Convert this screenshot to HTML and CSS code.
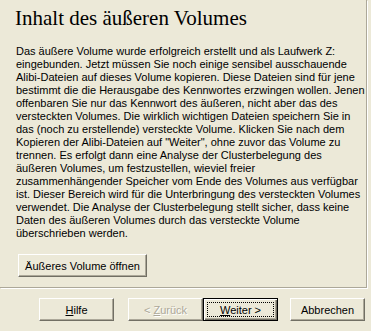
FILE: index.html
```html
<!DOCTYPE html>
<html lang="de">
<head>
<meta charset="utf-8">
<link rel="stylesheet" href="styles.css">
</head>
<body>
<div class="page">
  <div class="panel">
    <h1 class="title">Inhalt des äußeren Volumes</h1>
    <p class="text">Das äußere Volume wurde erfolgreich erstellt und als Laufwerk Z:<br>eingebunden. Jetzt müssen Sie noch einige sensibel ausschauende<br>Alibi-Dateien auf dieses Volume kopieren. Diese Dateien sind für jene<br>bestimmt die die Herausgabe des Kennwortes erzwingen wollen. Jenen<br>offenbaren Sie nur das Kennwort des äußeren, nicht aber das des<br>versteckten Volumes. Die wirklich wichtigen Dateien speichern Sie in<br>das (noch zu erstellende) versteckte Volume. Klicken Sie nach dem<br>Kopieren der Alibi-Dateien auf "Weiter", ohne zuvor das Volume zu<br>trennen. Es erfolgt dann eine Analyse der Clusterbelegung des<br>äußeren Volumes, um festzustellen, wieviel freier<br>zusammenhängender Speicher vom Ende des Volumes aus verfügbar<br>ist. Dieser Bereich wird für die Unterbringung des versteckten Volumes<br>verwendet. Die Analyse der Clusterbelegung stellt sicher, dass keine<br>Daten des äußeren Volumes durch das versteckte Volume<br>überschrieben werden.</p>
    <button class="btn btn-open">Äußeres Volume öffnen</button>
  </div>
  <div class="footer">
    <button class="btn btn-help"><u>H</u>ilfe</button>
    <button class="btn btn-back" disabled>&lt; <u>Z</u>urück</button>
    <button class="btn btn-default"><u>W</u>eiter &gt;</button>
    <button class="btn btn-cancel">Abbrechen</button>
  </div>
</div>
</body>
</html>
```

FILE: styles.css
```css
html, body {
  margin: 0;
  padding: 0;
  background: #ECE9D8;
}
.page {
  width: 371px;
  height: 331px;
  overflow: hidden;
  font-family: "Liberation Sans", Arial, sans-serif;
  font-size: 11px;
  color: #000;
}
.panel {
  width: 367px;
  height: 288px;
  box-sizing: border-box;
  border-right: 1px solid #ACA899;
  border-bottom: 1px solid #ACA899;
  box-shadow: 1px 1px 0 #fff;
  padding: 0 0 0 15px;
  display: flex;
  flex-direction: column;
  align-items: flex-start;
}
.title {
  margin: 6px 0 0 0;
  font-family: "Liberation Serif", "Times New Roman", serif;
  font-weight: normal;
  font-size: 21px;
  line-height: 24px;
}
.text {
  margin: 15px 0 0 1px;
  line-height: 13px;
  white-space: nowrap;
}
.btn {
  font-family: "Liberation Sans", Arial, sans-serif;
  font-size: 11px;
  color: #000;
  background: #ECE9D8;
  height: 23px;
  width: 75px;
  padding: 0;
  margin: 0;
  box-sizing: border-box;
  border: 1px solid;
  border-color: #fff #716F64 #716F64 #fff;
  box-shadow: inset -1px -1px 0 #ACA899;
  border-radius: 0;
  position: relative;
}
.btn-open {
  width: 129px;
  margin: 14px 0 0 3px;
}
.footer {
  display: flex;
  padding: 10px 0 0 39px;
}
.btn-back {
  margin-left: 14px;
  color: #ACA899;
  text-shadow: 1px 1px 0 #fff;
}
.btn-cancel {
  margin-left: 12px;
}
.btn-default {
  border: 1px solid #000;
  box-shadow: inset 1px 1px 0 #fff, inset -1px -1px 0 #716F64, inset -2px -2px 0 #ACA899;
}
.btn-default::after {
  content: "";
  position: absolute;
  left: 3px;
  top: 3px;
  right: 3px;
  bottom: 3px;
  border: 1px dotted #000;
}
```
